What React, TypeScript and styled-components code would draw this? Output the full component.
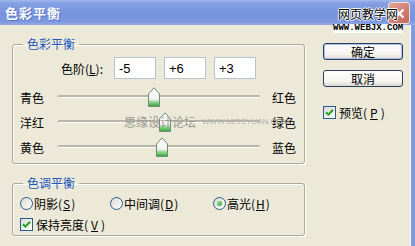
import * as React from 'react';
import styled, { createGlobalStyle } from 'styled-components';

const Global = createGlobalStyle`
  html, body { margin: 0; padding: 0; background: #ece9d8; }
  body { font-family: "Noto Sans CJK SC", "Liberation Sans", sans-serif; font-size: 12px; color: #000; }
`;

const Dialog = styled.div`
  position: relative;
  width: 415px;
  height: 246px;
  display: flex;
  flex-direction: column;
  overflow: hidden;
  background: #ece9d8;
`;

const TitleBar = styled.div`
  height: 25px;
  flex: none;
  display: flex;
  align-items: center;
  justify-content: space-between;
  padding: 0 5px 0 5px;
  background: linear-gradient(to bottom, #a3b8ec 0%, #859fe3 12%, #7693df 55%, #7e99e1 88%, #98ade7 100%);
`;

const Title = styled.span`
  color: #fff;
  font-size: 13px;
  font-weight: bold;
  letter-spacing: 1px;
  text-shadow: 1px 1px 0 #5a74c0;
`;

const CloseBox = styled.div`
  width: 20px;
  height: 20px;
  margin-top: 1px;
  border: 1px solid #f2ddd8;
  border-radius: 3px;
  background: linear-gradient(135deg, #e0a699 0%, #cc7e70 60%, #c06a5c 100%);
  display: flex;
  align-items: center;
  justify-content: center;
`;

const Frame = styled.div`
  flex: 1;
  display: flex;
  gap: 18px;
  padding: 12px 0 0 12px;
  border-right: 4px solid #809be1;
  box-shadow: inset -1px 0 0 #fbfaf5;
`;

const LeftColumn = styled.div`
  width: 293px;
  display: flex;
  flex-direction: column;
  gap: 12px;
`;

const RightColumn = styled.div`
  width: 80px;
  display: flex;
  flex-direction: column;
  padding-top: 6px;
`;

const Group = styled.fieldset<{ $bottom: number }>`
  margin: 0;
  padding: 0 8px ${(p) => p.$bottom}px 7px;
  border: 1px solid #aaa897;
  border-radius: 3px;
  box-shadow: inset 1px 1px 0 #fff, 1px 1px 0 #fff;
  min-width: 0;
`;

const Legend = styled.legend`
  margin-left: 3px;
  padding: 0 4px;
  line-height: 14px;
  color: #2357b9;
`;

const LevelRow = styled.div`
  display: flex;
  align-items: center;
  gap: 8px;
  padding: 6px 0 0 41px;
  height: 22px;
`;

const LevelLabel = styled.span`
  width: 45px;
`;

const LevelInput = styled.div`
  width: 42px;
  height: 22px;
  box-sizing: border-box;
  border: 1px solid #b4c4d4;
  background: #fff;
  padding-left: 4px;
  display: flex;
  align-items: center;
  font-family: "Liberation Sans", sans-serif;
  font-size: 13px;
`;

const SliderList = styled.div`
  margin-top: 6px;
  display: flex;
  flex-direction: column;
`;

const SliderRow = styled.div`
  height: 25px;
  display: flex;
  align-items: center;
`;

const SideLabel = styled.span<{ $right?: boolean }>`
  width: ${(p) => (p.$right ? 24 : 38)}px;
  margin-left: ${(p) => (p.$right ? 12 : 0)}px;
  white-space: nowrap;
`;

const TrackArea = styled.div`
  position: relative;
  flex: 1;
  align-self: stretch;
`;

const TrackLine = styled.div`
  margin-top: 10px;
  height: 2px;
  border-radius: 2px;
  background: #b9b6a8;
  border-bottom: 1px solid #fff;
  box-shadow: -1px 0 0 #d6d3c6;
`;

const Thumb = styled.svg`
  position: absolute;
  top: 2px;
  transform: translateX(-50%);
`;

const OptionRow = styled.div<{ $cols?: string }>`
  display: grid;
  grid-template-columns: ${(p) => p.$cols || 'auto'};
  height: 18px;
  align-items: center;
`;

const Option = styled.label`
  display: flex;
  align-items: center;
  gap: 1px;
  white-space: nowrap;
`;

const Radio = styled.span<{ $on?: boolean }>`
  width: 13px;
  height: 13px;
  box-sizing: border-box;
  border-radius: 50%;
  border: 1px solid #2a5c8c;
  background: linear-gradient(135deg, #dcdad2, #fff);
  display: flex;
  align-items: center;
  justify-content: center;
  &::after {
    content: '';
    display: ${(p) => (p.$on ? 'block' : 'none')};
    width: 5px;
    height: 5px;
    border-radius: 50%;
    background: radial-gradient(circle at 35% 35%, #8fe08f, #21a121);
  }
`;

const Check = styled.span`
  width: 13px;
  height: 13px;
  box-sizing: border-box;
  border: 1px solid #2a5c8c;
  background: linear-gradient(135deg, #dcdad2, #fff);
  display: flex;
  align-items: center;
  justify-content: center;
`;

const Mn = styled.span`
  text-decoration: underline;
`;

const Button = styled.button<{ $def?: boolean }>`
  width: 80px;
  height: 17px;
  padding: 0;
  margin-bottom: 10px;
  border: 1px solid #2c3e5e;
  border-radius: 3px;
  background: linear-gradient(to bottom, #ffffff 0%, #f4f3ee 70%, #dcd8cc 100%);
  box-shadow: ${(p) => (p.$def ? 'inset 0 0 0 1px #a9bdec' : 'none')};
  font-family: "Noto Sans CJK SC", sans-serif;
  font-size: 12px;
  line-height: 15px;
  color: #000;
`;

const PreviewRow = styled(Option)`
  margin-top: 7px;
  gap: 3px;
`;

const MarkCn = styled.div`
  position: absolute;
  left: 338px;
  top: 7px;
  font-size: 12px;
  line-height: 14px;
  color: #000;
  text-shadow: 1px 0 0 #fff, -1px 0 0 #fff, 0 1px 0 #fff, 0 -1px 0 #fff;
`;

const MarkEn = styled.div`
  position: absolute;
  left: 333px;
  top: 24px;
  font-family: "Liberation Mono", monospace;
  font-weight: bold;
  font-size: 9px;
  line-height: 9px;
  color: #000;
  background: rgba(255, 255, 255, 0.85);
`;

const MarkForum = styled.div`
  position: absolute;
  left: 124px;
  top: 113px;
  display: flex;
  align-items: center;
  gap: 6px;
  color: #9c9a92;
  pointer-events: none;
`;

const MarkForumEn = styled.span`
  font-family: "Liberation Sans", sans-serif;
  font-size: 8px;
  color: #aeaca3;
`;

const ThumbIcon = ({ pos }: { pos: number }) => (
  <Thumb width="12" height="20" viewBox="0 0 12 20" style={{ left: `${pos}%` }}>
    <defs>
      <linearGradient id="thumbFill" x1="0" y1="0" x2="0" y2="1">
        <stop offset="0" stopColor="#ffffff" />
        <stop offset="0.62" stopColor="#f1f1ec" />
        <stop offset="0.72" stopColor="#a6dca6" />
        <stop offset="1" stopColor="#2fa52f" />
      </linearGradient>
    </defs>
    <path d="M0.5 7 L6 0.8 L11.5 7 V19.5 H0.5 Z" fill="url(#thumbFill)" stroke="#6f8a78" strokeWidth="1" />
  </Thumb>
);

const CheckMark = () => (
  <svg width="9" height="9" viewBox="0 0 9 9">
    <path d="M1 4.2 L3.4 6.6 L8 1.8" fill="none" stroke="#21a121" strokeWidth="2" />
  </svg>
);

const sliders = [
  { left: '青色', right: '红色', value: -5 },
  { left: '洋红', right: '绿色', value: 6 },
  { left: '黄色', right: '蓝色', value: 3 },
];

export default function App() {
  return (
    <Dialog>
      <Global />
      <TitleBar>
        <Title>色彩平衡</Title>
        <CloseBox>
          <svg width="11" height="11" viewBox="0 0 11 11">
            <path d="M1.5 1.5 L9.5 9.5 M9.5 1.5 L1.5 9.5" stroke="#fff" strokeWidth="2.2" />
          </svg>
        </CloseBox>
      </TitleBar>
      <Frame>
        <LeftColumn>
          <Group $bottom={3}>
            <Legend>色彩平衡</Legend>
            <LevelRow>
              <LevelLabel>
                色阶(<Mn>L</Mn>):
              </LevelLabel>
              <LevelInput>-5</LevelInput>
              <LevelInput>+6</LevelInput>
              <LevelInput>+3</LevelInput>
            </LevelRow>
            <SliderList>
              {sliders.map((s) => (
                <SliderRow key={s.left}>
                  <SideLabel>{s.left}</SideLabel>
                  <TrackArea>
                    <TrackLine />
                    <ThumbIcon pos={(s.value + 100) / 2} />
                  </TrackArea>
                  <SideLabel $right>{s.right}</SideLabel>
                </SliderRow>
              ))}
            </SliderList>
          </Group>
          <Group $bottom={2}>
            <Legend>色调平衡</Legend>
            <OptionRow $cols="90px 103px auto" style={{ marginTop: 4 }}>
              <Option>
                <Radio />
                阴影(<Mn>S</Mn>)
              </Option>
              <Option>
                <Radio />
                中间调(<Mn>D</Mn>)
              </Option>
              <Option>
                <Radio $on />
                高光(<Mn>H</Mn>)
              </Option>
            </OptionRow>
            <OptionRow style={{ marginTop: 3 }}>
              <Option style={{ gap: 3 }}>
                <Check>
                  <CheckMark />
                </Check>
                保持亮度(<Mn>V</Mn>)
              </Option>
            </OptionRow>
          </Group>
        </LeftColumn>
        <RightColumn>
          <Button $def>确定</Button>
          <Button>取消</Button>
          <PreviewRow>
            <Check>
              <CheckMark />
            </Check>
            预览(<Mn>P</Mn>)
          </PreviewRow>
        </RightColumn>
      </Frame>
      <MarkCn>网页教学网</MarkCn>
      <MarkEn>WWW.WEBJX.COM</MarkEn>
      <MarkForum>
        思缘设计论坛
        <MarkForumEn>WWW.MISSYUAN.COM</MarkForumEn>
      </MarkForum>
    </Dialog>
  );
}
